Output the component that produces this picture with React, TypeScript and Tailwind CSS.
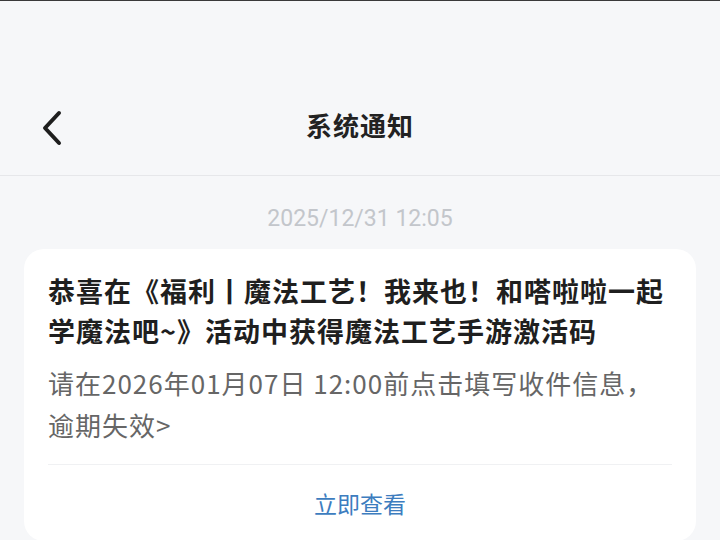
const App = () => {
  return (
    <div className="w-[720px] h-[540px] overflow-hidden bg-[#f6f7f9] font-['Noto_Sans_CJK_SC',sans-serif]">
      {/* status strip */}
      <div className="h-px bg-[#3a3a3a]"></div>

      {/* Header */}
      <div className="mt-[75px] h-[100px] flex items-center relative border-b border-[#e6e7ea]">
        <div className="absolute left-[40px] top-[34px]">
          <svg width="24" height="36" viewBox="0 0 24 36" fill="none">
            <path d="M19 3 L5 18 L19 33" stroke="#1e1e1e" strokeWidth="4" strokeLinecap="round" strokeLinejoin="round" />
          </svg>
        </div>
        <h1 className="flex-1 text-center text-[26px] font-bold text-[#222] tracking-[1px] -mt-[2px]">系统通知</h1>
      </div>

      {/* Date */}
      <div className="mt-[28px] text-center text-[23px] leading-[30px] text-[#c3c6cb] font-['Roboto','Noto_Sans_CJK_SC',sans-serif]">2025/12/31 12:05</div>

      {/* Card */}
      <div className="mx-[24px] mt-[15px] bg-white rounded-[20px] px-[24px] pt-[22px]">
        <p className="text-[27px] leading-[40px] font-bold text-[#1f1f1f] tracking-[1px]">
          恭喜在《福利丨魔法工艺！我来也！和嗒啦啦一起学魔法吧~》活动中获得魔法工艺手游激活码
        </p>
        <p className="mt-[11px] text-[26px] leading-[42px] text-[#666] tracking-[1px]">
          请在2026年01月07日 12:00前点击填写收件信息，逾期失效&gt;
        </p>
        <div className="mt-[18px] h-px bg-[#f0f1f3]"></div>
        <div className="h-[76px] flex items-center justify-center text-[23px] text-[#3d7dbf]">立即查看</div>
      </div>
    </div>
  );
};

export default App;
